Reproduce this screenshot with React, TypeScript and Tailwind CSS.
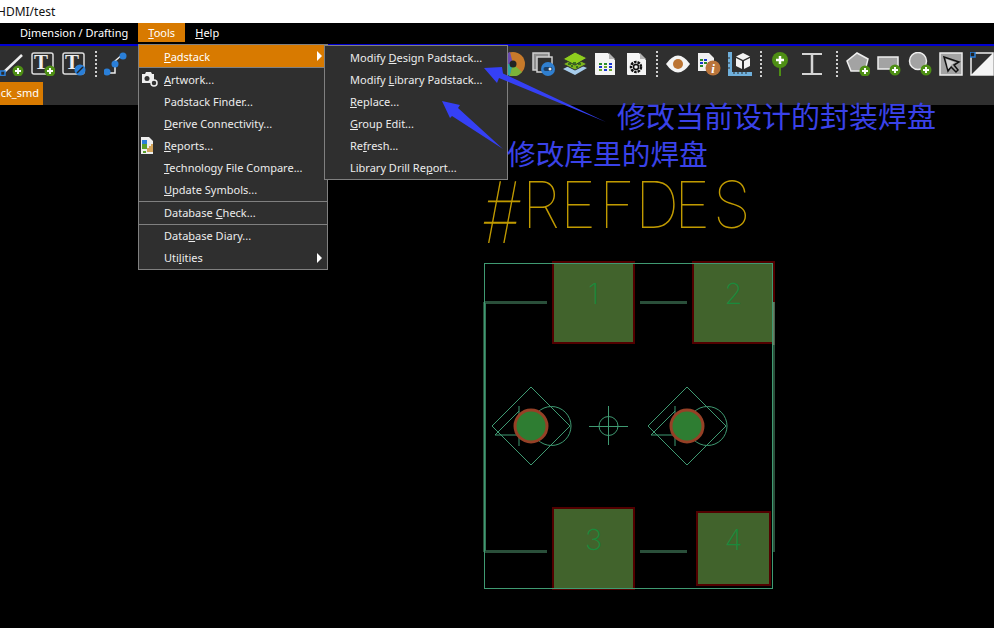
import React from "react";

const uiFont = "font-['Noto_Sans','Open_Sans',sans-serif]";

function Plus({ cx = 18, cy = 19 }: { cx?: number; cy?: number }) {
  return (
    <g>
      <circle cx={cx} cy={cy} r={5.5} fill="#4e8f14" />
      <path d={`M${cx - 3} ${cy}h6M${cx} ${cy - 3}v6`} stroke="#fff" strokeWidth={2} />
    </g>
  );
}

function Icon({ children, w = 24, className = "" }: { children: React.ReactNode; w?: number; className?: string }) {
  return (
    <svg width={w} height={24} viewBox={`0 0 ${w} 24`} className={`shrink-0 ${className}`}>
      {children}
    </svg>
  );
}

function Dots({ className = "" }: { className?: string }) {
  return <div className={`h-[26px] w-0 shrink-0 border-l-[2px] border-dotted border-[#cfcfcf] ${className}`} />;
}

function LetterT({ x, y }: { x: number; y: number }) {
  return (
    <text x={x} y={y} fontFamily="Liberation Serif" fontWeight={700} fontSize={21} fill="#eee" textAnchor="middle">
      T
    </text>
  );
}

function LeftTools() {
  return (
    <div className="flex items-center">
      <Icon>
        <path d="M3 21 22 3" stroke="#eee" strokeWidth={2.5} />
        <rect x={0.5} y={19} width={4.5} height={4.5} fill="#2b2b2b" stroke="#2a7fd8" strokeWidth={1.5} />
        <Plus />
      </Icon>
      <Icon className="ml-[7px]">
        <rect x={1} y={1} width={21} height={21} rx={2} fill="none" stroke="#ddd" strokeWidth={1.5} />
        <LetterT x={10} y={17} />
        <Plus cx={19} cy={19} />
      </Icon>
      <Icon className="ml-[7px]">
        <rect x={1} y={1} width={21} height={21} rx={2} fill="none" stroke="#ddd" strokeWidth={1.5} />
        <LetterT x={10} y={17} />
        <circle cx={18} cy={18} r={5.5} fill="#2a7fd8" />
        <path d="M15 21 21 15" stroke="#222" strokeWidth={1.5} />
      </Icon>
      <Dots className="ml-[9px]" />
      <Icon className="ml-[7px]">
        <path d="M4 21h7v-12l8-7" stroke="#eee" strokeWidth={1.5} fill="none" />
        <circle cx={3} cy={20} r={3.5} fill="#2a7fd8" />
        <circle cx={11} cy={12} r={3.5} fill="#2a7fd8" />
        <circle cx={19} cy={4} r={3.5} fill="#2a7fd8" />
      </Icon>
    </div>
  );
}

function RightTools() {
  return (
    <div className="flex items-center pl-[501px]">
      {/* colour wheel */}
      <Icon>
        <circle cx={12} cy={12} r={12} fill="#c77a2a" />
        <path d="M12 12 0 12A12 12 0 0 0 9 24Z" fill="#2fa6a0" />
        <path d="M12 12 9 24A12 12 0 0 0 21 20Z" fill="#7bb33a" />
        <path d="M12 12 0 12A12 12 0 0 1 9 0Z" fill="#6a4bb0" />
        <circle cx={12} cy={12} r={3.5} fill="#222" />
      </Icon>
      <Icon className="ml-[7px]">
        <rect x={1} y={1} width={16} height={17} fill="#8d8d8d" stroke="#cfcfcf" strokeWidth={1.5} />
        <rect x={5} y={5} width={15} height={15} fill="#2f2f2f" stroke="#cfcfcf" strokeWidth={1.5} />
        <circle cx={16} cy={17} r={7} fill="#2f7fd0" />
        <rect x={11.5} y={15} width={9} height={4} rx={2} fill="#1c3f66" />
        <circle cx={18} cy={17} r={1.5} fill="#eee" />
      </Icon>
      <Icon className="ml-[7px]">
        <path d="M12 11 24 16 12 23 0 17Z" fill="#a8cdec" />
        <path d="M12 6 24 12 12 18 0 12Z" fill="#7db51e" stroke="#2f2f2f" />
        <path d="M12 0 24 6 12 13 0 7Z" fill="#8fce1e" stroke="#2f2f2f" />
        <path d="M5 12h3M10 11h3M15 12h3M8 14h2M13 15h2" stroke="#1d5a1d" strokeWidth={1.5} />
      </Icon>
      <Icon className="ml-[7px]">
        <path d="M1 1h13l7 7v15H2a1 1 0 0 1-1-1Z" fill="#f4f4f4" />
        <path d="M15 1l6 6h-6Z" fill="#b5b5b5" />
        <path d="M5 11h3v2H5ZM10 11h3v2h-3Z" fill="#2b8a2b" />
        <path d="M15 11h3v2h-3ZM5 14h3v2H5ZM15 14h3v2h-3ZM10 17h3v2h-3Z" fill="#1a35d0" />
        <path d="M10 14h3v2h-3ZM5 17h3v2H5ZM15 17h3v2h-3Z" fill="#6aa52a" />
      </Icon>
      <Icon className="ml-[7px]">
        <path d="M2 1h12l7 7v15H3a1 1 0 0 1-1-1Z" fill="#f4f4f4" />
        <path d="M15 1l6 6h-6Z" fill="#b5b5b5" />
        <circle cx={11} cy={15} r={5} fill="none" stroke="#111" strokeWidth={2.5} strokeDasharray="2.5 1" />
        <circle cx={11} cy={15} r={2.5} fill="none" stroke="#111" strokeWidth={1.5} />
      </Icon>
      <Dots className="ml-[7px] mr-[8px]" />
      <Icon>
        <path d="M0 12Q12 -5 24 12 12 29 0 12Z" fill="#f4f4f4" />
        <circle cx={12} cy={12} r={5} fill="#bb7433" />
      </Icon>
      <Icon className="ml-[7px]">
        <path d="M1 1h11l5 5v13H1Z" fill="#f0f0f0" />
        <path d="M3 7h3v2H3ZM3 13h3v2H3ZM7 10h3v2H7Z" fill="#2b8a2b" />
        <path d="M7 7h3v2H7ZM3 10h3v2H3ZM11 10h3v2h-3Z" fill="#1a35d0" />
        <circle cx={16} cy={16} r={7.5} fill="#b9743a" />
        <text x={16} y={21} fontFamily="Liberation Serif" fontStyle="italic" fontWeight={700} fontSize={13} fill="#fff" textAnchor="middle">
          i
        </text>
      </Icon>
      <Icon className="ml-[7px]">
        <path d="M0 0h4v20h20v4H0Z" fill="#6fb0dc" />
        <path d="M6 20v2M10 20v2M14 20v2M18 20v2M0 6h2M0 11h2M0 16h2" stroke="#2f2f2f" />
        <path d="M15 1l7 3.5-7 3.5-7-3.5Z" fill="#f4f4f4" />
        <path d="M8 6l6 3v8l-6-3ZM22 6l-6 3v8l6-3Z" fill="#f4f4f4" />
      </Icon>
      <Dots className="ml-[8px]" />
      <Icon className="ml-[6px]">
        <circle cx={12} cy={8} r={8} fill="#4e8f14" />
        <path d="M8 8h8M12 4v8" stroke="#fff" strokeWidth={2.5} />
        <path d="M12 15v9" stroke="#4e8f14" strokeWidth={2} />
      </Icon>
      <Icon className="ml-[8px]">
        <path d="M2 2h20M2 22h20" stroke="#d5d5d5" strokeWidth={2} />
        <path d="M12 2v20" stroke="#d5d5d5" strokeWidth={2.5} />
        <path d="M9 2q3 0 3 3 0-3 3-3M9 22q3 0 3-3 0 3 3 3" stroke="#d5d5d5" fill="none" />
      </Icon>
      <Dots className="ml-[12px] mr-[8px]" />
      <Icon>
        <path d="M11 1 22 7 19 19H5L1 9Z" fill="#a3a3a3" stroke="#eee" strokeWidth={1.5} />
        <Plus cx={19} cy={19} />
      </Icon>
      <Icon className="ml-[7px]">
        <rect x={1} y={5} width={20} height={12} fill="#a3a3a3" stroke="#eee" strokeWidth={1.5} />
        <Plus cx={18} cy={18} />
      </Icon>
      <Icon className="ml-[7px]">
        <circle cx={10} cy={9} r={8.5} fill="#a3a3a3" stroke="#eee" strokeWidth={1.5} />
        <Plus cx={18} cy={18} />
      </Icon>
      <Icon className="ml-[7px]">
        <rect x={1} y={1} width={22} height={22} fill="#a3a3a3" stroke="#eee" strokeWidth={1.5} />
        <path d="M5 5 20 10 15 13 19 18 17 20 12 15 9 19Z" fill="#a3a3a3" stroke="#111" strokeWidth={1.5} />
        <path d="M7 7 16 10.5 12.5 12.5 11.5 15 9 17Z" fill="#fff" opacity={0.5} />
      </Icon>
      <Icon className="ml-[7px]">
        <rect x={1} y={1} width={22} height={22} fill="#2f2f2f" stroke="#eee" strokeWidth={1.5} />
        <path d="M23 1v22H1Z" fill="#f4f4f4" />
        <rect x={0} y={0} width={5} height={5} fill="#222" stroke="#2a7fd8" strokeWidth={1.5} />
      </Icon>
    </div>
  );
}

function Item({ children, icon, arrow, hot, className = "" }: { children: React.ReactNode; icon?: React.ReactNode; arrow?: boolean; hot?: boolean; className?: string }) {
  return (
    <div className={`relative flex h-[22px] items-center pl-[25px] text-[11px] ${hot ? "bg-[#d87a00] text-white" : "text-[#ececec]"} ${className}`}>
      {icon}
      <span>{children}</span>
      {arrow && <span className="absolute right-[5px] top-1/2 h-0 w-0 -translate-y-1/2 border-y-[5px] border-l-[5px] border-y-transparent border-l-white" />}
    </div>
  );
}

function CameraIcon() {
  return (
    <svg width={17} height={16} viewBox="0 0 17 16" className="absolute left-[2px] top-[2px]">
      <path d="M1 3h3l1-2h5l1 2h2v9H1Z" fill="#eee" />
      <circle cx={6} cy={7.5} r={2.5} fill="#333" />
      <circle cx={13} cy={12} r={3} fill="#333" stroke="#eee" strokeWidth={1.5} />
    </svg>
  );
}

function ReportIcon() {
  return (
    <svg width={13} height={17} viewBox="0 0 13 17" className="absolute left-[2px] top-[2px]">
      <path d="M0 0h8l4 4v13H0Z" fill="#eee" />
      <rect x={1} y={3} width={5} height={4} fill="#2a7fd8" />
      <rect x={1} y={7} width={5} height={5} fill="#5aa02c" />
      <path d="M7 15V11M9 15V9M11 15V7" stroke="#c98a2a" strokeWidth={1.5} />
      <path d="M2 15h3" stroke="#5aa02c" strokeWidth={2} />
    </svg>
  );
}

function ToolsMenu() {
  return (
    <div className={`absolute left-[138px] top-[44px] w-[190px] border border-[#808080] bg-[#2f2f2f] ${uiFont}`}>
      <Item hot arrow className="mb-px h-[23px] border-b border-[#808080] pt-[2px]">
        <u>P</u>adstack
      </Item>
      <Item icon={<CameraIcon />}>
        <u>A</u>rtwork...
      </Item>
      <Item>Padstack Finder...</Item>
      <Item>
        <u>D</u>erive Connectivity...
      </Item>
      <Item icon={<ReportIcon />}>
        <u>R</u>eports...
      </Item>
      <Item>
        <u>T</u>echnology File Compare...
      </Item>
      <Item className="h-[21px]">
        <u>U</u>pdate Symbols...
      </Item>
      <div className="h-px bg-[#808080]" />
      <Item>
        Database <u>C</u>heck...
      </Item>
      <div className="h-px bg-[#808080]" />
      <Item>
        Data<u>b</u>ase Diary...
      </Item>
      <Item arrow>
        Uti<u>l</u>ities
      </Item>
    </div>
  );
}

function PadstackMenu() {
  return (
    <div className={`absolute left-[324px] top-[45px] w-[184px] border border-[#808080] bg-[#2f2f2f] pt-px ${uiFont}`}>
      <Item>
        Modify <u>D</u>esign Padstack...
      </Item>
      <Item>
        Modify <u>L</u>ibrary Padstack...
      </Item>
      <Item>
        <u>R</u>eplace...
      </Item>
      <Item>
        <u>G</u>roup Edit...
      </Item>
      <Item>
        Re<u>f</u>resh...
      </Item>
      <Item>
        Library Drill Re<u>p</u>ort...
      </Item>
    </div>
  );
}

// the footprint on the black canvas, in page coordinates
const thin = "#3f9a72";
const silk = "#2a4f3a";

function Via({ dx }: { dx: number }) {
  return (
    <g transform={`translate(${dx} 0)`} fill="none" stroke={thin} strokeWidth={1}>
      <path d="M531 387 570 426 531 465 492 426Z" />
      <circle cx={551.5} cy={426} r={19.5} />
      <path d="M519 406V446M495 435H530M495 435 519 411" />
      <circle cx={531} cy={426} r={16} fill="#2e7d32" stroke="#964026" strokeWidth={3} />
    </g>
  );
}

function Pad({ x, y, w, h, n }: { x: number; y: number; w: number; h: number; n: string }) {
  return (
    <g>
      <rect x={x} y={y} width={w} height={h} fill="#41632c" stroke="#520000" strokeWidth={2} />
      <text x={x + w / 2} y={y + h / 2 + 1} fontFamily="Inter" fontWeight={200} fontSize={29} fill="#1a8a3c" textAnchor="middle">
        {n}
      </text>
    </g>
  );
}

function Footprint() {
  return (
    <svg width={994} height={523} viewBox="0 105 994 523" className="absolute inset-0">
      <text transform="translate(481 243) scale(0.7 1) skewX(-6)" fontFamily="Inter" fontWeight={100} fontSize={85} fill="#c09a00">
        #
      </text>
      <text transform="translate(0 228) scale(0.95 1)" x="549.5 589.5 630.5 668.4 709.5 750.5" y={0} fontFamily="Inter" fontWeight={100} fontSize={65} fill="#c09a00">
        REFDES
      </text>
      <Pad x={553} y={262} w={81} h={81} n="1" />
      <Pad x={693} y={262} w={81} h={81} n="2" />
      <Pad x={553} y={508} w={81} h={81} n="3" />
      <Pad x={697} y={512} w={73} h={73} n="4" />
      <path d="M484.5 302.5H547M640 302.5H687M484.5 302V552M773.5 302V552M484.5 551.5H547M640 551.5H687" stroke={silk} strokeWidth={3} fill="none" />
      <path d="M773.5 302V345" stroke="#6b7a62" strokeWidth={2} />
      <rect x={484.5} y={263.5} width={288} height={325} fill="none" stroke={thin} strokeWidth={1} />
      <path d="M485 303V551" stroke={thin} strokeWidth={1} />
      <Via dx={0} />
      <Via dx={156} />
      <g fill="none" stroke={thin} strokeWidth={1}>
        <circle cx={608.5} cy={426} r={9.5} />
        <path d="M589 426.5H628M608.5 406V445" />
      </g>
    </svg>
  );
}

function Annotations() {
  return (
    <>
      <svg width={994} height={628} className="pointer-events-none absolute inset-0">
        <path d="M484 68 502 67 503 73.5 606 122 499 78 497 83Z" fill="#3540f5" />
        <path d="M442 101 460 105 458 108 503 149 452 116 450 118Z" fill="#3540f5" />
      </svg>
      <div className="absolute left-[617px] top-[95px] whitespace-nowrap font-['Noto_Sans_CJK_SC',sans-serif] text-[29px] leading-[40px] text-[#3a42e8]">修改当前设计的封装焊盘</div>
      <div className="absolute left-[507px] top-[133px] whitespace-nowrap font-['Noto_Sans_CJK_SC',sans-serif] text-[28.7px] leading-[40px] text-[#3a42e8]">修改库里的焊盘</div>
    </>
  );
}

export default function App() {
  return (
    <div className={`relative flex h-[628px] w-[994px] flex-col overflow-hidden bg-black ${uiFont}`}>
      <div className="flex h-[23px] shrink-0 items-center bg-white text-[12px] text-[#111]">
        <span className="-ml-[3px]">HDMI/test</span>
      </div>
      <div className="flex h-[21px] shrink-0 items-start bg-black text-[11px] text-white">
        <span className="ml-[20px] flex h-[19px] items-center pt-[2px]">
          <span>
            D<u>i</u>mension / Drafting
          </span>
        </span>
        <span className="ml-[10px] flex h-[19px] w-[47px] items-center justify-center bg-[#d87a00] pt-[2px]">
          <span>
            <u>T</u>ools
          </span>
        </span>
        <span className="ml-[10px] flex h-[19px] items-center pt-[2px]">
          <span>
            <u>H</u>elp
          </span>
        </span>
      </div>
      <div className="h-[2px] shrink-0 bg-[#0000d2]" />
      <div className="relative h-[59px] shrink-0 bg-[#2f2f2f] pt-[6px]">
        <div className="flex h-[24px] items-center">
          <LeftTools />
        </div>
        <div className="absolute left-0 top-[6px] flex h-[24px] items-center">
          <RightTools />
        </div>
        <div className="mt-[6px] flex h-[23px] w-[43px] items-center justify-end bg-[#d87a00] pr-[4px] text-[11px] text-white">
          <span className="whitespace-nowrap">ack_smd</span>
        </div>
      </div>
      <div className="relative flex-1 bg-black">
        <Footprint />
      </div>
      <ToolsMenu />
      <PadstackMenu />
      <Annotations />
    </div>
  );
}
